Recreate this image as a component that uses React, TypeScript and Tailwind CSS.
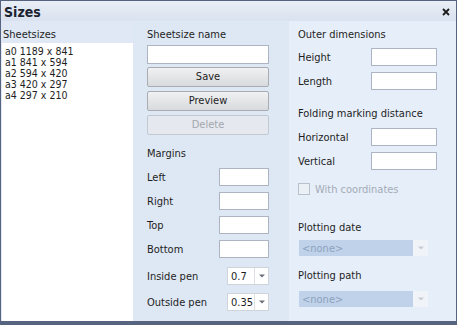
import React from "react";

const font = { fontFamily: '"DejaVu Sans Condensed", "DejaVu Sans", sans-serif' };

function TextBox({ w }: { w: string }) {
  return <div className={`${w} h-[18px] bg-white border border-[#abb4c0]`} />;
}

function Btn({ label, disabled }: { label: string; disabled?: boolean }) {
  return (
    <div
      className={
        disabled
          ? "h-[20px] w-[122px] rounded-[2px] border border-[#c3c9d1] bg-[#e5e9ef] flex items-center justify-center text-[#a3a7ad]"
          : "h-[20px] w-[122px] rounded-[2px] border border-[#a9adb3] bg-gradient-to-b from-[#f0f1f2] to-[#d9dadd] flex items-center justify-center text-[#1e1e1e]"
      }
    >
      {label}
    </div>
  );
}

function Combo({ value }: { value: string }) {
  return (
    <div className="w-[42px] h-[18px] bg-white border border-[#cfd4da] flex items-center">
      <div className="flex-1 pl-[3px] leading-none">{value}</div>
      <div className="w-[14px] h-full border-l border-[#dde1e6] flex items-center justify-center">
        <svg width="6" height="4" viewBox="0 0 6 4">
          <path d="M0 0.5 L6 0.5 L3 3.5 Z" fill="#6a6f76" />
        </svg>
      </div>
    </div>
  );
}

function DisSelect() {
  return (
    <div className="w-[129px] h-[16px] flex">
      <div className="flex-1 bg-[#bfd2ea] text-[#8ea3bd] pl-[3px] flex items-center leading-none">&lt;none&gt;</div>
      <div className="w-[15px] bg-[#f0f4f9] flex items-center justify-center">
        <svg width="6" height="4" viewBox="0 0 6 4">
          <path d="M0 0.5 L6 0.5 L3 3.5 Z" fill="#c4cbd4" />
        </svg>
      </div>
    </div>
  );
}

export default function App() {
  const sizes = ["a0 1189 x 841", "a1 841 x 594", "a2 594 x 420", "a3 420 x 297", "a4 297 x 210"];
  return (
    <div
      className="w-[457px] h-[325px] border border-[#56647f] border-b-[4px] border-b-[#56647f] bg-[#dfe8f4] flex flex-col text-[11px] text-[#1e1e1e] overflow-hidden"
      style={font}
    >
      {/* Title bar */}
      <div className="h-[20px] flex items-center justify-between bg-gradient-to-b from-[#e9eef6] to-[#d9e2ef] pl-[3px] pr-[6px]">
        <span className="text-[14px] font-bold text-[#1b2330] leading-none mt-[2px]">Sizes</span>
        <svg width="8" height="8" viewBox="0 0 8 8" className="mt-[2px]">
          <path d="M1 1 L7 7 M7 1 L1 7" stroke="#1b1b1b" strokeWidth="1.8" />
        </svg>
      </div>

      <div className="flex-1 flex min-h-0">
        {/* Left column */}
        <div className="w-[132px] pl-[1px] flex flex-col">
          <div className="h-[22px] flex items-end pb-[3px] pl-[1px] leading-none">Sheetsizes</div>
          <div className="flex-1 bg-white pt-[3px] pl-[3px] flex flex-col">
            {sizes.map((s) => (
              <div key={s} className="h-[11px] text-[10.5px] leading-[11px] overflow-hidden">{s}</div>
            ))}
          </div>
        </div>

        {/* Middle column */}
        <div className="w-[156px] pl-[14px] flex flex-col bg-[#dee8f4]">
          <div className="h-[22px] flex items-end pb-[3px] leading-none">Sheetsize name</div>
          <div className="mt-[2px]">
            <div className="w-[122px] h-[19px] bg-white border border-[#abb4c0]" />
          </div>
          <div className="mt-[3px] flex flex-col gap-[4px]">
            <Btn label="Save" />
            <Btn label="Preview" />
            <Btn label="Delete" disabled />
          </div>
          <div className="mt-[13px] h-[11px] leading-none">Margins</div>
          <div className="mt-[9px] flex flex-col gap-[6px]">
            {["Left", "Right", "Top", "Bottom"].map((l) => (
              <div key={l} className="h-[18px] flex items-center justify-between w-[122px]">
                <span className="leading-none">{l}</span>
                <div className="w-[50px] h-[18px] bg-white border border-[#abb4c0]" />
              </div>
            ))}
          </div>
          <div className="mt-[9px] flex flex-col gap-[8px]">
            <div className="h-[18px] flex items-center justify-between w-[122px]">
              <span className="leading-none">Inside pen</span>
              <Combo value="0.7" />
            </div>
            <div className="h-[18px] flex items-center justify-between w-[122px]">
              <span className="leading-none">Outside pen</span>
              <Combo value="0.35" />
            </div>
          </div>
        </div>

        {/* Right column */}
        <div className="flex-1 pl-[9px] flex flex-col bg-[#e6eef9]">
          <div className="h-[22px] flex items-end pb-[3px] leading-none">Outer dimensions</div>
          <div className="mt-[5px] flex flex-col gap-[6px]">
            {["Height", "Length"].map((l) => (
              <div key={l} className="h-[18px] flex items-center justify-between w-[139px]">
                <span className="leading-none">{l}</span>
                <TextBox w="w-[66px]" />
              </div>
            ))}
          </div>
          <div className="mt-[18px] h-[11px] leading-none">Folding marking distance</div>
          <div className="mt-[9px] flex flex-col gap-[6px]">
            {["Horizontal", "Vertical"].map((l) => (
              <div key={l} className="h-[18px] flex items-center justify-between w-[139px]">
                <span className="leading-none">{l}</span>
                <TextBox w="w-[66px]" />
              </div>
            ))}
          </div>
          <div className="mt-[13px] flex items-center gap-[5px]">
            <div className="w-[12px] h-[12px] border border-[#b9c1cc] bg-[#ebf0f7]" />
            <span className="text-[#a3abb6] leading-none">With coordinates</span>
          </div>
          <div className="mt-[27px] h-[11px] leading-none">Plotting date</div>
          <div className="mt-[7px] pl-[1px]"><DisSelect /></div>
          <div className="mt-[14px] h-[11px] leading-none">Plotting path</div>
          <div className="mt-[10px] pl-[1px]"><DisSelect /></div>
        </div>
      </div>
    </div>
  );
}
